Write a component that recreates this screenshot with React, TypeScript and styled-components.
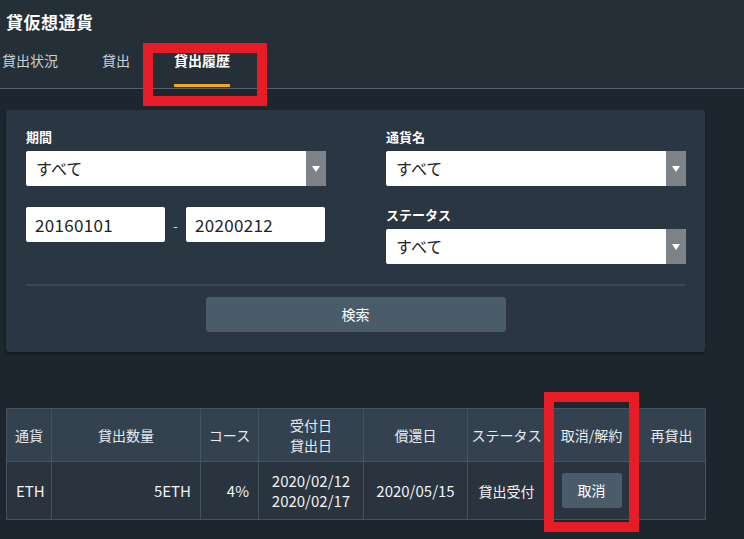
import React from "react";
import styled, { createGlobalStyle } from "styled-components";

const GlobalStyle = createGlobalStyle`
  html, body {
    margin: 0;
    padding: 0;
    background: #1d262e;
  }
  body {
    font-family: "Noto Sans CJK JP", "Noto Sans", sans-serif;
    color: #e6eaee;
  }
  * {
    box-sizing: border-box;
  }
`;

const Page = styled.div`
  position: relative;
  width: 744px;
  height: 539px;
  overflow: hidden;
  background: #1d262e;
`;

const Header = styled.div`
  background: #252f38;
  border-bottom: 1px solid #56626c;
  height: 89px;
`;

const Title = styled.h1`
  margin: 0;
  padding: 9px 0 0 6px;
  height: 50px;
  font-size: 17px;
  font-weight: 700;
  color: #ffffff;
  letter-spacing: 0.5px;
`;

const Tabs = styled.div`
  display: flex;
  gap: 38px;
  margin-left: -1px;
`;

const Tab = styled.div<{ $active?: boolean }>`
  padding: 0 3px;
  height: 37px;
  display: flex;
  flex-direction: column;
  justify-content: space-between;
  font-size: 14px;
  line-height: 20px;
  font-weight: ${(p) => (p.$active ? 700 : 400)};
  color: ${(p) => (p.$active ? "#ffffff" : "#c9d0d6")};

  &::after {
    content: "";
    display: block;
    height: 3px;
    background: ${(p) => (p.$active ? "#f0a81c" : "transparent")};
  }
`;

const Content = styled.div`
  padding: 21px 39px 0 6px;
`;

const Panel = styled.div`
  background: #2a3641;
  border-radius: 3px;
  padding: 18px 20px 20px;
  box-shadow: 0 2px 3px rgba(0, 0, 0, 0.35);
`;

const FieldGrid = styled.div`
  display: grid;
  grid-template-columns: 300px 300px;
  column-gap: 60px;
`;

const Column = styled.div`
  display: flex;
  flex-direction: column;
`;

const Label = styled.div<{ $top?: number }>`
  font-size: 13px;
  font-weight: 700;
  color: #ffffff;
  line-height: 17px;
  margin-top: ${(p) => p.$top ?? 0}px;
  margin-bottom: 6px;
`;

const Select = styled.div`
  display: flex;
  height: 35px;
  background: #ffffff;
  border-radius: 2px;
  overflow: hidden;
`;

const SelectValue = styled.div`
  flex: 1;
  padding-left: 10px;
  font-size: 16px;
  line-height: 35px;
  color: #222;
`;

const Arrow = styled.div`
  width: 20px;
  background: #7d8289;
  display: flex;
  align-items: center;
  justify-content: center;

  &::before {
    content: "";
    border-left: 4px solid transparent;
    border-right: 4px solid transparent;
    border-top: 6px solid #ffffff;
  }
`;

const DateRow = styled.div`
  display: flex;
  align-items: center;
  margin-top: 21px;
`;

const DateInput = styled.div`
  width: 139px;
  height: 35px;
  background: #ffffff;
  border-radius: 2px;
  padding-left: 9px;
  font-size: 17px;
  letter-spacing: 0.3px;
  line-height: 35px;
  color: #222;
`;

const Dash = styled.div`
  width: 21px;
  text-align: center;
  color: #d0d6dc;
  font-size: 14px;
`;

const Divider = styled.div`
  height: 2px;
  background: #34495a;
  margin: 20px 0 11px;
`;

const ButtonRow = styled.div`
  display: flex;
  justify-content: center;
`;

const SearchButton = styled.div`
  width: 300px;
  height: 35px;
  background: #4a5c6a;
  border-radius: 3px;
  font-size: 14px;
  line-height: 35px;
  text-align: center;
  color: #ffffff;
`;

const Table = styled.table`
  margin-top: 56px;
  width: 699px;
  border-collapse: collapse;
  table-layout: fixed;
  font-size: 14px;
`;

const Th = styled.th<{ $w: number }>`
  width: ${(p) => p.$w}px;
  height: 53px;
  background: #33424e;
  border: 1px solid #435361;
  font-weight: 400;
  color: #e6eaee;
  line-height: 20px;
  text-align: center;
  padding: 0;
  white-space: nowrap;
`;

const Td = styled.td<{ $align?: "left" | "right" | "center" }>`
  height: 58px;
  background: #29343f;
  border: 1px solid #435361;
  text-align: ${(p) => p.$align ?? "center"};
  padding: 0 9px;
  font-size: 15px;
  line-height: 20px;
  color: #f0f2f4;
  white-space: nowrap;
`;

const SmallCell = styled.span`
  font-size: 14px;
`;

const CancelButton = styled.div`
  display: inline-block;
  width: 60px;
  height: 35px;
  line-height: 35px;
  background: #4a5c6a;
  border-radius: 3px;
  font-size: 14px;
  color: #ffffff;
`;

const Mark = styled.div<{ $x: number; $y: number; $w: number; $h: number }>`
  position: absolute;
  left: ${(p) => p.$x}px;
  top: ${(p) => p.$y}px;
  width: ${(p) => p.$w}px;
  height: ${(p) => p.$h}px;
  border: 10px solid #e81c24;
  pointer-events: none;
`;

const columns = [
  { label: "通貨", w: 45 },
  { label: "貸出数量", w: 149 },
  { label: "コース", w: 58 },
  { label: "受付日\n貸出日", w: 105 },
  { label: "償還日", w: 104 },
  { label: "ステータス", w: 78 },
  { label: "取消/解約", w: 92 },
  { label: "再貸出", w: 68 },
];

const App: React.FC = () => {
  return (
    <Page>
      <GlobalStyle />
      <Header>
        <Title>貸仮想通貨</Title>
        <Tabs>
          <Tab>貸出状況</Tab>
          <Tab>貸出</Tab>
          <Tab $active>貸出履歴</Tab>
        </Tabs>
      </Header>

      <Content>
        <Panel>
          <FieldGrid>
            <Column>
              <Label>期間</Label>
              <Select>
                <SelectValue>すべて</SelectValue>
                <Arrow />
              </Select>
              <DateRow>
                <DateInput>20160101</DateInput>
                <Dash>-</Dash>
                <DateInput>20200212</DateInput>
              </DateRow>
            </Column>
            <Column>
              <Label>通貨名</Label>
              <Select>
                <SelectValue>すべて</SelectValue>
                <Arrow />
              </Select>
              <Label $top={20}>ステータス</Label>
              <Select>
                <SelectValue>すべて</SelectValue>
                <Arrow />
              </Select>
            </Column>
          </FieldGrid>
          <Divider />
          <ButtonRow>
            <SearchButton>検索</SearchButton>
          </ButtonRow>
        </Panel>

        <Table>
          <thead>
            <tr>
              {columns.map((c) => (
                <Th key={c.label} $w={c.w}>
                  {c.label.split("\n").map((line, i) => (
                    <div key={i}>{line}</div>
                  ))}
                </Th>
              ))}
            </tr>
          </thead>
          <tbody>
            <tr>
              <Td $align="left">ETH</Td>
              <Td $align="right">5ETH</Td>
              <Td $align="right">4%</Td>
              <Td>
                <div>2020/02/12</div>
                <div>2020/02/17</div>
              </Td>
              <Td>2020/05/15</Td>
              <Td>
                <SmallCell>貸出受付</SmallCell>
              </Td>
              <Td>
                <CancelButton>取消</CancelButton>
              </Td>
              <Td />
            </tr>
          </tbody>
        </Table>
      </Content>

      <Mark $x={143} $y={43} $w={124} $h={63} />
      <Mark $x={544} $y={392} $w={95} $h={140} />
    </Page>
  );
};

export default App;
